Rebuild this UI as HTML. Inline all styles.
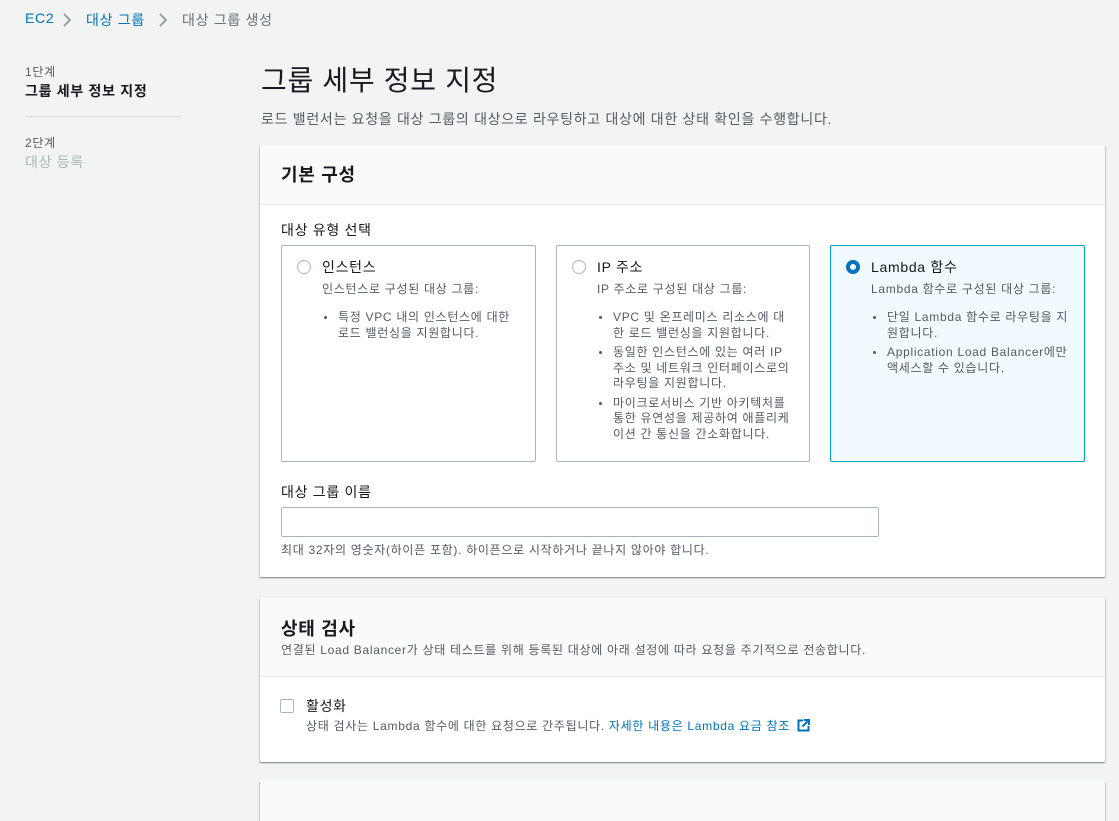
<!DOCTYPE html>
<html><head><meta charset="utf-8"><style>
*{box-sizing:border-box;margin:0;padding:0}
body{width:1119px;height:790px;background:#f2f3f3;font-family:"Liberation Sans","Noto Sans CJK KR",sans-serif;color:#16191f;position:relative;overflow:hidden;font-size:14px;letter-spacing:0.05em}
.a{position:absolute;white-space:nowrap}
.panel{position:absolute;left:260px;width:845px;background:#fff;box-shadow:0 1px 1px 0 rgba(0,28,36,.3),1px 1px 1px 0 rgba(0,28,36,.15),-1px 1px 1px 0 rgba(0,28,36,.15)}
.hd{position:absolute;left:0;top:0;width:100%;background:#fafafa;border-bottom:1px solid #eaeded}
.card{position:absolute;top:245px;height:217px;border:1px solid #aab7b8;border-radius:2px;background:#fff}
.card.sel{border-color:#00a1c9;background:#f1faff}
.radio{position:absolute;left:15px;top:14px;width:14px;height:14px;border:1px solid #aab7b8;border-radius:50%;background:#fff}
.radio.on{border:4px solid #0073bb}
.ct{position:absolute;left:40px;top:11px;font-size:14px;color:#16191f}
.cd{position:absolute;left:40px;top:34px;font-size:12px;color:#545b64}
.cl{position:absolute;left:36px;top:64px;width:220px;font-size:12px;color:#545b64;line-height:15.5px;list-style:none}
.cl li{position:relative;padding-left:20px;margin-bottom:4px;white-space:normal;word-break:break-all}
.cl li:before{content:"";position:absolute;left:6px;top:6px;width:3px;height:3px;border-radius:50%;background:#545b64}
</style></head><body>
<div class="a" style="left:25px;top:10px;font-size:14px;color:#0073bb">EC2</div>
<svg class="a" style="left:62px;top:13px" width="10" height="14" viewBox="0 0 10 14"><path d="M2 1l6 6-6 6" fill="none" stroke="#879596" stroke-width="1.6"/></svg>
<div class="a" style="left:86px;top:10px;font-size:14px;color:#0073bb">대상 그룹</div>
<svg class="a" style="left:158px;top:13px" width="10" height="14" viewBox="0 0 10 14"><path d="M2 1l6 6-6 6" fill="none" stroke="#879596" stroke-width="1.6"/></svg>
<div class="a" style="left:182px;top:10px;font-size:14px;color:#687078">대상 그룹 생성</div>

<div class="a" style="left:25px;top:63px;font-size:12px;color:#545b64">1단계</div>
<div class="a" style="left:25px;top:81px;font-size:14px;font-weight:bold;color:#16191f">그룹 세부 정보 지정</div>
<div class="a" style="left:25px;top:116px;width:156px;height:1px;background:#d5dbdb"></div>
<div class="a" style="left:25px;top:134px;font-size:12px;color:#545b64">2단계</div>
<div class="a" style="left:25px;top:152px;font-size:14px;color:#aab7b8">대상 등록</div>

<div class="a" style="left:261px;top:59px;font-size:28px;color:#16191f">그룹 세부 정보 지정</div>
<div class="a" style="left:261px;top:109px;font-size:14px;color:#545b64">로드 밸런서는 요청을 대상 그룹의 대상으로 라우팅하고 대상에 대한 상태 확인을 수행합니다.</div>

<div class="panel" style="top:145px;height:432px">
 <div class="hd" style="height:60px"></div>
 <div class="a" style="left:21px;top:16px;font-size:18px;font-weight:bold">기본 구성</div>
 <div class="a" style="left:21px;top:75px;font-size:14px">대상 유형 선택</div>
 <div class="a" style="left:21px;top:337px;font-size:14px">대상 그룹 이름</div>
 <div class="a" style="left:21px;top:362px;width:598px;height:30px;border:1px solid #aab7b8;border-radius:2px"></div>
 <div class="a" style="left:21px;top:396px;font-size:12px;color:#545b64">최대 32자의 영숫자(하이픈 포함). 하이픈으로 시작하거나 끝나지 않아야 합니다.</div>
</div>

<div class="card" style="left:281px;width:255px">
 <div class="radio"></div><div class="ct">인스턴스</div>
 <div class="cd">인스턴스로 구성된 대상 그룹:</div>
 <ul class="cl"><li>특정 VPC 내의 인스턴스에 대한<br>로드 밸런싱을 지원합니다.</li></ul>
</div>
<div class="card" style="left:556px;width:254px">
 <div class="radio"></div><div class="ct">IP 주소</div>
 <div class="cd">IP 주소로 구성된 대상 그룹:</div>
 <ul class="cl"><li>VPC 및 온프레미스 리소스에 대<br>한 로드 밸런싱을 지원합니다.</li><li>동일한 인스턴스에 있는 여러 IP<br>주소 및 네트워크 인터페이스로의<br>라우팅을 지원합니다.</li><li>마이크로서비스 기반 아키텍처를<br>통한 유연성을 제공하여 애플리케<br>이션 간 통신을 간소화합니다.</li></ul>
</div>
<div class="card sel" style="left:830px;width:255px">
 <div class="radio on"></div><div class="ct">Lambda 함수</div>
 <div class="cd">Lambda 함수로 구성된 대상 그룹:</div>
 <ul class="cl"><li>단일 Lambda 함수로 라우팅을 지<br>원합니다.</li><li>Application Load Balancer에만<br>액세스할 수 있습니다.</li></ul>
</div>

<div class="panel" style="top:598px;height:164px">
 <div class="hd" style="height:79px"></div>
 <div class="a" style="left:21px;top:17px;font-size:18px;font-weight:bold">상태 검사</div>
 <div class="a" style="left:21px;top:43px;font-size:12px;color:#545b64">연결된 Load Balancer가 상태 테스트를 위해 등록된 대상에 아래 설정에 따라 요청을 주기적으로 전송합니다.</div>
 <div class="a" style="left:20px;top:101px;width:14px;height:14px;border:1px solid #aab7b8;border-radius:2px"></div>
 <div class="a" style="left:46px;top:98px;font-size:14px">활성화</div>
 <div class="a" style="left:46px;top:119px;font-size:12px;color:#545b64">상태 검사는 Lambda 함수에 대한 요청으로 간주됩니다. <span style="color:#0073bb">자세한 내용은 Lambda 요금 참조</span>
 <svg width="13" height="13" viewBox="0 0 13 13" style="vertical-align:-2px;margin-left:3px"><path d="M6 1.5H1.5v10h10V7" fill="none" stroke="#0073bb" stroke-width="2"/><path d="M7 1h5v5M12 1L5.5 7.5" fill="none" stroke="#0073bb" stroke-width="2"/></svg></div>
</div>

<div class="panel" style="top:781px;height:40px;background:#fafafa"></div>
</body></html>
